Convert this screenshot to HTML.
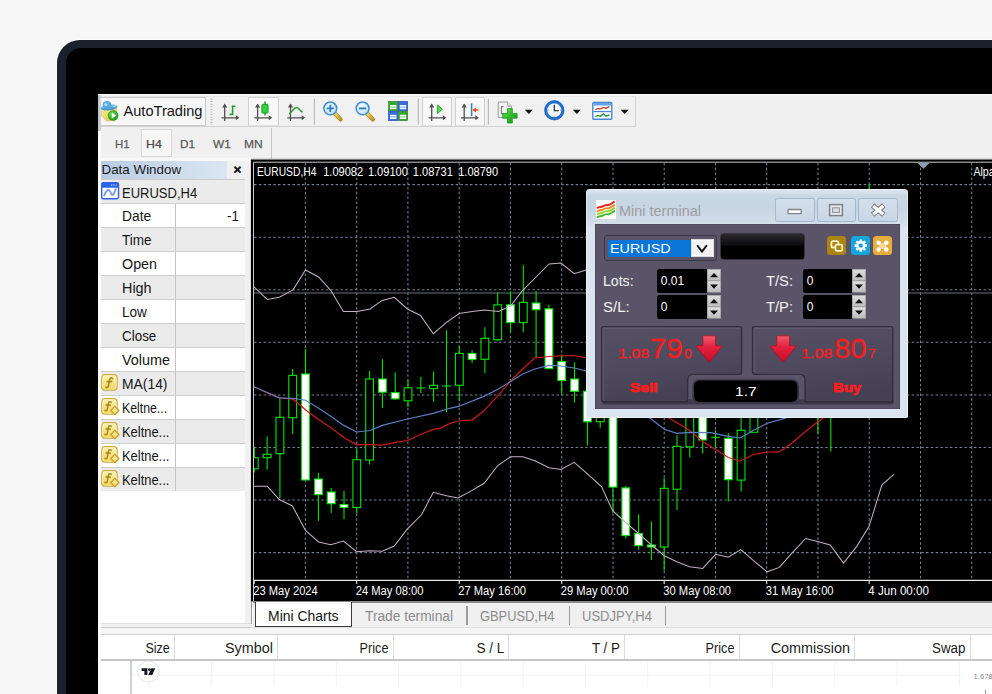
<!DOCTYPE html>
<html lang="en"><head><meta charset="utf-8"><title>Mini terminal</title>
<style>
*{box-sizing:border-box;margin:0;padding:0}
html,body{width:992px;height:694px;overflow:hidden;background:#f7f7f7}
body{position:relative;font-family:"Liberation Sans",sans-serif;color:#111}
.abs{position:absolute}
#frame{left:56.7px;top:39.9px;width:1000px;height:700px;background:#1a202c;border-radius:23px 0 0 0;box-shadow:0 0 0 0.7px #fdfdfd}
#bezel{left:65.9px;top:47.8px;width:1000px;height:700px;background:#000;border-radius:15px 0 0 0}
#app{left:98px;top:94px;width:894px;height:600px;background:#f0f0f0;overflow:hidden}
.ct{font-family:"Liberation Sans",sans-serif;font-size:12px;fill:#fff}
.t{white-space:nowrap;line-height:1}
.row{left:101px;width:144px;height:24px;border-bottom:1px solid #cfcfcf}
.row .div{position:absolute;left:74px;top:0;width:1px;height:23px;background:#c4c4c4}
.g{background:#ebebeb}.w{background:#fff}
.sep{width:1px;background:#dcdcdc;top:635px;height:24px}
</style></head>
<body>
<div id="frame" class="abs"></div>
<div id="bezel" class="abs"></div>
<div id="app" class="abs"></div>
<!-- toolbar -->
<div class="abs" style="left:98px;top:94px;width:894px;height:1px;background:#fbfbfb"></div>
<div class="abs" style="left:98px;top:96px;width:538.4px;height:31.2px;border:1px solid #d2d2d2;border-left:none;border-top-color:#e6e6e6;background:#f1f1f1"></div>
<div class="abs" style="left:101px;top:97px;width:105px;height:29px;border:1px solid #c9c9c9;border-left:none;background:#f7f7f7"></div>
<div class="abs" style="left:248px;top:97px;width:30.5px;height:29px;background:#f8f8f8;border:1px solid #d0d0d0;border-bottom-color:#e2e2e2"></div>
<div class="abs" style="left:422px;top:97px;width:30px;height:29px;background:#f8f8f8;border:1px solid #d0d0d0;border-bottom-color:#e2e2e2"></div>
<div class="abs" style="left:455px;top:97px;width:30px;height:29px;background:#f8f8f8;border:1px solid #d0d0d0;border-bottom-color:#e2e2e2"></div>
<svg class="abs" style="left:0;top:0" width="992" height="160" viewBox="0 0 992 160"><defs><linearGradient id="gy" x1="0" y1="0" x2="1" y2="1"><stop offset="0" stop-color="#fff3a0"/><stop offset="1" stop-color="#e2b93a"/></linearGradient><radialGradient id="gg" cx="0.4" cy="0.35" r="0.7"><stop offset="0" stop-color="#6fe05a"/><stop offset="1" stop-color="#0f9a10"/></radialGradient><linearGradient id="gb" x1="0" y1="0" x2="0" y2="1"><stop offset="0" stop-color="#7cc4ee"/><stop offset="1" stop-color="#3a8fd0"/></linearGradient><linearGradient id="gold" x1="0" y1="0" x2="1" y2="0"><stop offset="0" stop-color="#f3dc78"/><stop offset="1" stop-color="#c89a20"/></linearGradient><radialGradient id="lens" cx="0.4" cy="0.35" r="0.8"><stop offset="0" stop-color="#f4fbff"/><stop offset="1" stop-color="#b5d8f3"/></radialGradient><linearGradient id="gplus" x1="0" y1="0" x2="1" y2="1"><stop offset="0" stop-color="#5be04a"/><stop offset="1" stop-color="#0a9a12"/></linearGradient><radialGradient id="clk" cx="0.5" cy="0.4" r="0.6"><stop offset="0" stop-color="#fff"/><stop offset="1" stop-color="#dfe9f5"/></radialGradient><linearGradient id="spg" x1="0" y1="0" x2="0" y2="1"><stop offset="0" stop-color="#dedede"/><stop offset="1" stop-color="#bdbdbd"/></linearGradient><linearGradient id="fgrad" x1="0" y1="0" x2="0" y2="1"><stop offset="0" stop-color="#fdf4b8"/><stop offset="1" stop-color="#f0d558"/></linearGradient></defs><path d="M100.8 108.6L100.9 114.8L106.4 121L111 120.6L117 114.4L116.6 107.6Z" fill="url(#gy)" stroke="#d2ab3c" stroke-width="0.5"/><ellipse cx="109.1" cy="107.4" rx="8.5" ry="2.9" fill="url(#gb)" transform="rotate(-7 109.1 107.4)"/><ellipse cx="107" cy="104.6" rx="4.3" ry="3.5" fill="#58abe2"/><ellipse cx="105.8" cy="104.4" rx="1.8" ry="1.5" fill="#a8dbf8"/><ellipse cx="114.6" cy="106" rx="1.6" ry="0.9" fill="#a8dbf8" transform="rotate(-20 114.6 106)"/><circle cx="113.1" cy="115.6" r="5" fill="url(#gg)" stroke="#168a18" stroke-width="0.5"/><path d="M111.8 112.6L116.2 115.5L111.8 118.4Z" fill="#fff"/><path d="M211.5 98.5V125" stroke="#b4b4b4" stroke-width="2" stroke-dasharray="1 1.6"/><path d="M224.7 104.8V121 M221.5 117.8H237.7" stroke="#505050" stroke-width="1.3" fill="none"/><path d="M222.1 107.4L224.7 103.6L227.29999999999998 107.4Z M235.89999999999998 115.3L239.29999999999998 117.8L235.89999999999998 120.3Z" fill="#505050"/><path d="M232.6 105.5V115.2 M232.6 106.2H235.4 M229.6 114.4H232.6" stroke="#1ea02a" stroke-width="1.6" fill="none"/><path d="M257.6 104.8V121 M254.40000000000003 117.8H270.6" stroke="#505050" stroke-width="1.3" fill="none"/><path d="M255.00000000000003 107.4L257.6 103.6L260.20000000000005 107.4Z M268.8 115.3L272.20000000000005 117.8L268.8 120.3Z" fill="#505050"/><path d="M265 101.5V115.6" stroke="#1aa326" stroke-width="1.5"/><rect x="261.9" y="104.3" width="6.2" height="8.8" rx="0.8" fill="#2fd23c" stroke="#159a22" stroke-width="0.9"/><path d="M290.5 104.8V121 M287.3 117.8H303.5" stroke="#505050" stroke-width="1.3" fill="none"/><path d="M287.9 107.4L290.5 103.6L293.1 107.4Z M301.7 115.3L305.1 117.8L301.7 120.3Z" fill="#505050"/><path d="M289 114C292 112 294 107.4 296.6 107.6C299 107.8 300 111 302.6 112.2" stroke="#2a9a36" stroke-width="1.5" fill="none"/><path d="M314.4 98.5V124.5 M418.3 98.5V124.5 M488.4 98.5V124.5" stroke="#b9b9b9" stroke-width="1.2"/><path d="M334.5 113L340.5 119.4" stroke="#a8841c" stroke-width="4.2" stroke-linecap="round"/><path d="M334.7 113L340.3 119" stroke="url(#gold)" stroke-width="2.8" stroke-linecap="round"/><circle cx="330.3" cy="108.4" r="6.4" fill="url(#lens)" stroke="#3f8fd2" stroke-width="1.5"/><path d="M326.7 108.4H333.90000000000003 M330.3 104.8V112" stroke="#2f7fbe" stroke-width="1.9"/><path d="M366.8 113L372.8 119.4" stroke="#a8841c" stroke-width="4.2" stroke-linecap="round"/><path d="M367.0 113L372.6 119" stroke="url(#gold)" stroke-width="2.8" stroke-linecap="round"/><circle cx="362.6" cy="108.4" r="6.4" fill="url(#lens)" stroke="#3f8fd2" stroke-width="1.5"/><path d="M359.0 108.4H366.20000000000005" stroke="#2f7fbe" stroke-width="1.9"/><rect x="388.5" y="101.4" width="9.4" height="9.4" fill="#3aa52e" stroke="#1f7d1c" stroke-width="0.6"/><rect x="390.0" y="105.0" width="6.4" height="4.2" fill="#f4f8ff"/><path d="M390.0 107.10000000000001H396.4" stroke="#3aa52e" stroke-width="0.8" opacity="0.7"/><rect x="398.3" y="101.4" width="9.4" height="9.4" fill="#3a6fe0" stroke="#1c46b8" stroke-width="0.6"/><rect x="399.8" y="105.0" width="6.4" height="4.2" fill="#f4f8ff"/><path d="M399.8 107.10000000000001H406.2" stroke="#3a6fe0" stroke-width="0.8" opacity="0.7"/><rect x="388.5" y="111.2" width="9.4" height="9.4" fill="#3a6fe0" stroke="#1c46b8" stroke-width="0.6"/><rect x="390.0" y="114.8" width="6.4" height="4.2" fill="#f4f8ff"/><path d="M390.0 116.9H396.4" stroke="#3a6fe0" stroke-width="0.8" opacity="0.7"/><rect x="398.3" y="111.2" width="9.4" height="9.4" fill="#3aa52e" stroke="#1f7d1c" stroke-width="0.6"/><rect x="399.8" y="114.8" width="6.4" height="4.2" fill="#f4f8ff"/><path d="M399.8 116.9H406.2" stroke="#3aa52e" stroke-width="0.8" opacity="0.7"/><path d="M431.7 104.8V121 M428.5 117.8H444.7" stroke="#505050" stroke-width="1.3" fill="none"/><path d="M429.09999999999997 107.4L431.7 103.6L434.3 107.4Z M442.9 115.3L446.3 117.8L442.9 120.3Z" fill="#505050"/><path d="M437.4 104.9V113.6L442.4 109.3Z" fill="#5fd85a" stroke="#1f9a2a" stroke-width="0.9"/><path d="M464.2 104.8V121 M461.0 117.8H477.2" stroke="#505050" stroke-width="1.3" fill="none"/><path d="M461.59999999999997 107.4L464.2 103.6L466.8 107.4Z M475.4 115.3L478.8 117.8L475.4 120.3Z" fill="#505050"/><path d="M471.6 103.4V116.2" stroke="#2f7fc4" stroke-width="1.5"/><path d="M473 110H478.6" stroke="#e0521a" stroke-width="1.4"/><path d="M472.6 110L476.2 107.2V112.8Z" fill="#e0521a"/><path d="M498.2 102H507.4L511.6 106.2V117.6H498.2Z" fill="#f4f4f4" stroke="#9a9a9a" stroke-width="1"/><path d="M507.4 102V106.2H511.6" fill="#dcdcdc" stroke="#9a9a9a" stroke-width="0.8"/><path d="M503.6 106.6H501.4V113.6H503.6" stroke="#7a7a6a" stroke-width="1.1" fill="none"/><path d="M507.5 108.6H512.3V113.4H517.1V118.2H512.3V123H507.5V118.2H502.7V113.4H507.5Z" fill="url(#gplus)" stroke="#0e8a14" stroke-width="0.7"/><path d="M524.8 109.8H532.8L528.8 114Z" fill="#111"/><circle cx="554.3" cy="110.3" r="8.4" fill="url(#clk)" stroke="#1d6fd6" stroke-width="2.7"/><circle cx="554.3" cy="110.3" r="9.7" fill="none" stroke="#1554a8" stroke-width="0.7"/><path d="M554.3 105V110.6H558.6" stroke="#333" stroke-width="1.3" fill="none"/><path d="M554.3 103.4V104.4 M554.3 116.2V117.2 M547.4 110.3H548.4 M560.2 110.3H561.2" stroke="#7a8aa0" stroke-width="0.9"/><path d="M572.8 109.8H580.8L576.8 114Z" fill="#111"/><rect x="592.8" y="102.4" width="19" height="16.8" rx="1" fill="#fff" stroke="#4a86d6" stroke-width="1.4"/><rect x="593.4" y="103" width="17.8" height="2.6" fill="#6aa2e8"/><path d="M593.4 111.6H611.2" stroke="#4a86d6" stroke-width="1.2"/><path d="M595.4 109.6L598 108.4L600 109L603 107.4L606 108.2L609.4 106.6" stroke="#b8472a" stroke-width="1.4" fill="none"/><path d="M595.4 116.6L598 115.4L600.4 116.4L603.4 113.8L606 116.2L609.4 115" stroke="#2a9a3a" stroke-width="1.4" fill="none"/><path d="M620.7 109.8H628.7L624.7 114Z" fill="#111"/></svg>
<div class="abs t" style="left:123.5px;top:103.5px;font-size:14.6px;color:#151515">AutoTrading</div>
<div class="abs" style="left:97.7px;top:94.5px;width:3.3px;height:36.5px;background:linear-gradient(90deg,#bcbfc6,#d0d3d9)"></div>
<div class="abs" style="left:97.7px;top:131px;width:3.3px;height:563px;background:#fcfcfc"></div>
<!-- timeframe bar -->
<div class="abs" style="left:141px;top:129px;width:31px;height:28px;border:1px solid #d6d6d6;background:#f7f7f7"></div>
<div class="abs t" style="left:114.90px;top:139.45px;font-size:11.4px;transform:scaleX(1.0019);transform-origin:left center;color:#5a5a5a;-webkit-text-stroke:0.25px #5a5a5a;">H1</div>
<div class="abs t" style="left:146.30px;top:139.45px;font-size:11.4px;transform:scaleX(1.0842);transform-origin:left center;color:#4a4a4a;-webkit-text-stroke:0.25px #4a4a4a;">H4</div>
<div class="abs t" style="left:180.30px;top:139.45px;font-size:11.4px;transform:scaleX(1.0362);transform-origin:left center;color:#5a5a5a;-webkit-text-stroke:0.25px #5a5a5a;">D1</div>
<div class="abs t" style="left:212.90px;top:139.45px;font-size:11.4px;transform:scaleX(1.0409);transform-origin:left center;color:#5a5a5a;-webkit-text-stroke:0.25px #5a5a5a;">W1</div>
<div class="abs t" style="left:243.80px;top:139.45px;font-size:11.4px;transform:scaleX(1.0548);transform-origin:left center;color:#5a5a5a;-webkit-text-stroke:0.25px #5a5a5a;">MN</div>
<div class="abs" style="left:271.3px;top:128px;width:1.2px;height:30.5px;background:#c6c6c6"></div>
<!-- data window -->
<div class="abs" style="left:101px;top:158.4px;width:149px;height:2.8px;background:#f9f9f9"></div>
<div class="abs" style="left:101px;top:161px;width:126px;height:18px;background:linear-gradient(90deg,#b8cce4,#dbe6f1)"></div>
<div class="abs t" style="left:101.5px;top:162.5px;font-size:13.4px;color:#1a1a1a">Data Window</div>
<div class="abs t" style="left:233.5px;top:163.2px;font-size:13.5px;font-weight:bold;color:#111;-webkit-text-stroke:0.5px #111">×</div>
<div class="abs" style="left:101px;top:179.2px;width:144px;height:24.8px;background:#ebebeb;border-bottom:1px solid #cfcfcf;border-top:1.2px solid #cdcdcd"></div>
<svg class="abs" style="left:101px;top:182.4px;" width="19" height="18" viewBox="0 0 19 18"><rect x="0.7" y="0.7" width="16.8" height="16" rx="1.6" fill="#fff" stroke="#2a63ea" stroke-width="1.4"/><rect x="0.7" y="0.7" width="16.8" height="5.1" rx="1.2" fill="#2a63ea"/><rect x="10" y="2.4" width="1.3" height="1.3" fill="#b9c9f7"/><rect x="12.4" y="2.4" width="1.3" height="1.3" fill="#b9c9f7"/><rect x="14.8" y="2.4" width="1.3" height="1.3" fill="#e88"/><path d="M3.2 13.4C5 9.6 6.4 6.8 8.2 8.4C10 10 10.6 14.6 12.4 12.4C13.6 10.8 14 8.4 14.8 7" stroke="#7d9bea" stroke-width="1.9" fill="none" stroke-linecap="round"/></svg>
<div class="abs t" style="left:121.80px;top:185.75px;font-size:14px;transform:scaleX(0.9295);transform-origin:left center;color:#161616;">EURUSD,H4</div>
<div class="abs row w" style="top:203.5px"><span class="div"></span></div>
<div class="abs t" style="left:121.60px;top:210.22px;font-size:13.8px;transform:scaleX(1.0017);transform-origin:left center;color:#161616;">Date</div>
<div class="abs t" style="left:226.80px;top:210.22px;font-size:13.8px;transform:scaleX(0.9617);transform-origin:left center;color:#161616;">-1</div>
<div class="abs row g" style="top:227.5px"><span class="div"></span></div>
<div class="abs t" style="left:121.60px;top:234.22px;font-size:13.8px;transform:scaleX(0.9816);transform-origin:left center;color:#161616;">Time</div>
<div class="abs row w" style="top:251.5px"><span class="div"></span></div>
<div class="abs t" style="left:121.60px;top:258.22px;font-size:13.8px;transform:scaleX(1.0368);transform-origin:left center;color:#161616;">Open</div>
<div class="abs row g" style="top:275.5px"><span class="div"></span></div>
<div class="abs t" style="left:121.60px;top:282.22px;font-size:13.8px;transform:scaleX(1.0429);transform-origin:left center;color:#161616;">High</div>
<div class="abs row w" style="top:299.5px"><span class="div"></span></div>
<div class="abs t" style="left:121.60px;top:306.22px;font-size:13.8px;transform:scaleX(0.9836);transform-origin:left center;color:#161616;">Low</div>
<div class="abs row g" style="top:323.5px"><span class="div"></span></div>
<div class="abs t" style="left:121.60px;top:330.22px;font-size:13.8px;transform:scaleX(0.9722);transform-origin:left center;color:#161616;">Close</div>
<div class="abs row w" style="top:347.5px"><span class="div"></span></div>
<div class="abs t" style="left:121.60px;top:354.22px;font-size:13.8px;transform:scaleX(1.0450);transform-origin:left center;color:#161616;">Volume</div>
<div class="abs row g" style="top:371.5px"><svg class="abs" style="left:0.3px;top:2.6px;overflow:visible" width="20" height="19" viewBox="0 0 20 19"><rect x="0.7" y="0.7" width="15.4" height="15.4" rx="3" fill="url(#fgrad)" stroke="#cfaa34" stroke-width="1.2"/><rect x="1.7" y="1.7" width="13.4" height="13.4" rx="2.2" fill="none" stroke="#fffbe0" stroke-width="0.7" opacity="0.8"/><path d="M11.6 4.6C10.2 3.4 8.9 4 8.6 5.8L7.4 12C7.1 13.6 6 14 4.9 13.1 M6.2 7.7H10.6" fill="none" stroke="#a98a20" stroke-width="1.7" stroke-linecap="round"/></svg><span class="div"></span></div>
<div class="abs t" style="left:121.60px;top:378.22px;font-size:13.8px;transform:scaleX(1.0057);transform-origin:left center;color:#161616;">MA(14)</div>
<div class="abs row w" style="top:395.5px"><svg class="abs" style="left:0.3px;top:2.6px;overflow:visible" width="20" height="19" viewBox="0 0 20 19"><rect x="0.7" y="0.7" width="15.4" height="15.4" rx="3" fill="url(#fgrad)" stroke="#cfaa34" stroke-width="1.2"/><rect x="1.7" y="1.7" width="13.4" height="13.4" rx="2.2" fill="none" stroke="#fffbe0" stroke-width="0.7" opacity="0.8"/><path d="M10.2 4.2C8.9 3.2 7.7 3.8 7.4 5.4L6.3 11.2C6 12.7 5 13.1 4 12.3 M5.2 7.1H9.2" fill="none" stroke="#a98a20" stroke-width="1.6" stroke-linecap="round"/><path d="M13.9 8.4L18 12.5L13.9 16.6L9.8 12.5Z" fill="#f8e47c" stroke="#c49c24" stroke-width="1.1"/></svg><span class="div"></span></div>
<div class="abs t" style="left:121.60px;top:402.22px;font-size:13.8px;transform:scaleX(0.8908);transform-origin:left center;color:#161616;">Keltne...</div>
<div class="abs row g" style="top:419.5px"><svg class="abs" style="left:0.3px;top:2.6px;overflow:visible" width="20" height="19" viewBox="0 0 20 19"><rect x="0.7" y="0.7" width="15.4" height="15.4" rx="3" fill="url(#fgrad)" stroke="#cfaa34" stroke-width="1.2"/><rect x="1.7" y="1.7" width="13.4" height="13.4" rx="2.2" fill="none" stroke="#fffbe0" stroke-width="0.7" opacity="0.8"/><path d="M10.2 4.2C8.9 3.2 7.7 3.8 7.4 5.4L6.3 11.2C6 12.7 5 13.1 4 12.3 M5.2 7.1H9.2" fill="none" stroke="#a98a20" stroke-width="1.6" stroke-linecap="round"/><path d="M13.9 8.4L18 12.5L13.9 16.6L9.8 12.5Z" fill="#f8e47c" stroke="#c49c24" stroke-width="1.1"/></svg><span class="div"></span></div>
<div class="abs t" style="left:121.60px;top:426.22px;font-size:13.8px;transform:scaleX(0.9362);transform-origin:left center;color:#161616;">Keltne...</div>
<div class="abs row w" style="top:443.5px"><svg class="abs" style="left:0.3px;top:2.6px;overflow:visible" width="20" height="19" viewBox="0 0 20 19"><rect x="0.7" y="0.7" width="15.4" height="15.4" rx="3" fill="url(#fgrad)" stroke="#cfaa34" stroke-width="1.2"/><rect x="1.7" y="1.7" width="13.4" height="13.4" rx="2.2" fill="none" stroke="#fffbe0" stroke-width="0.7" opacity="0.8"/><path d="M10.2 4.2C8.9 3.2 7.7 3.8 7.4 5.4L6.3 11.2C6 12.7 5 13.1 4 12.3 M5.2 7.1H9.2" fill="none" stroke="#a98a20" stroke-width="1.6" stroke-linecap="round"/><path d="M13.9 8.4L18 12.5L13.9 16.6L9.8 12.5Z" fill="#f8e47c" stroke="#c49c24" stroke-width="1.1"/></svg><span class="div"></span></div>
<div class="abs t" style="left:121.60px;top:450.22px;font-size:13.8px;transform:scaleX(0.9362);transform-origin:left center;color:#161616;">Keltne...</div>
<div class="abs row g" style="top:467.5px"><svg class="abs" style="left:0.3px;top:2.6px;overflow:visible" width="20" height="19" viewBox="0 0 20 19"><rect x="0.7" y="0.7" width="15.4" height="15.4" rx="3" fill="url(#fgrad)" stroke="#cfaa34" stroke-width="1.2"/><rect x="1.7" y="1.7" width="13.4" height="13.4" rx="2.2" fill="none" stroke="#fffbe0" stroke-width="0.7" opacity="0.8"/><path d="M10.2 4.2C8.9 3.2 7.7 3.8 7.4 5.4L6.3 11.2C6 12.7 5 13.1 4 12.3 M5.2 7.1H9.2" fill="none" stroke="#a98a20" stroke-width="1.6" stroke-linecap="round"/><path d="M13.9 8.4L18 12.5L13.9 16.6L9.8 12.5Z" fill="#f8e47c" stroke="#c49c24" stroke-width="1.1"/></svg><span class="div"></span></div>
<div class="abs t" style="left:121.60px;top:474.22px;font-size:13.8px;transform:scaleX(0.9362);transform-origin:left center;color:#161616;">Keltne...</div>
<div class="abs" style="left:101px;top:491px;width:144px;height:132px;background:#fff"></div>
<div class="abs" style="left:245px;top:180px;width:6px;height:443px;background:#f0f0f0"></div>
<div class="abs" style="left:101px;top:622.6px;width:150px;height:0.9px;background:#e2e2e2"></div>
<svg class="chart" width="992" height="694" viewBox="0 0 992 694" style="position:absolute;left:0;top:0">
<defs><clipPath id="cc"><rect x="254" y="163" width="738" height="418"/></clipPath></defs>
<rect x="250.9" y="159.5" width="742" height="442" fill="#000"/>
<rect x="251" y="158.8" width="741" height="1.1" fill="#777"/>
<path d="M253.5 601 V162.2 H992" fill="none" stroke="#c8c8c8" stroke-width="1"/>
<path d="M305.4 163V580 M356.7 163V580 M407.9 163V580 M459.2 163V580 M510.4 163V580 M561.7 163V580 M613.0 163V580 M664.2 163V580 M715.5 163V580 M766.7 163V580 M818.0 163V580 M869.2 163V580 M920.5 163V580 M971.7 163V580 M254 184.6H992 M254 237.2H992 M254 289.7H992 M254 342.3H992 M254 394.9H992 M254 447.5H992 M254 500.0H992 M254 552.6H992" stroke="#708091" stroke-width="1.05" stroke-dasharray="2.5 2.3" fill="none"/>
<path d="M254 293H992" stroke="#67737f" stroke-width="1.1"/>
<g clip-path="url(#cc)">
<path d="M254.3 447.6V472.4" stroke="#00e400" stroke-width="1.1"/>
<rect x="250.4" y="457.7" width="7.8" height="11.1" fill="#000" stroke="#00e400" stroke-width="1.1"/>
<path d="M267.1 436.5V469.8" stroke="#00e400" stroke-width="1.1"/>
<rect x="263.2" y="454.3" width="7.8" height="3.4" fill="#000" stroke="#00e400" stroke-width="1.1"/>
<path d="M279.9 398.2V498.0" stroke="#00e400" stroke-width="1.1"/>
<rect x="276.0" y="417.3" width="7.8" height="36.4" fill="#000" stroke="#00e400" stroke-width="1.1"/>
<path d="M292.7 369.0V434.0" stroke="#00e400" stroke-width="1.1"/>
<rect x="288.8" y="375.4" width="7.8" height="42.3" fill="#000" stroke="#00e400" stroke-width="1.1"/>
<path d="M305.5 348.8V480.0" stroke="#00e400" stroke-width="1.1"/>
<rect x="301.6" y="374.0" width="7.8" height="106.0" fill="#fff" stroke="#00e400" stroke-width="1.1"/>
<path d="M318.4 472.8V520.9" stroke="#00e400" stroke-width="1.1"/>
<rect x="314.5" y="479.0" width="7.8" height="15.6" fill="#fff" stroke="#00e400" stroke-width="1.1"/>
<path d="M331.2 488.0V513.0" stroke="#00e400" stroke-width="1.1"/>
<rect x="327.3" y="492.0" width="7.8" height="11.7" fill="#fff" stroke="#00e400" stroke-width="1.1"/>
<path d="M344.0 491.0V519.0" stroke="#00e400" stroke-width="1.1"/>
<rect x="340.1" y="504.5" width="7.8" height="3.0" fill="#fff" stroke="#00e400" stroke-width="1.1"/>
<path d="M356.8 448.6V513.4" stroke="#00e400" stroke-width="1.1"/>
<rect x="352.9" y="459.7" width="7.8" height="47.8" fill="#000" stroke="#00e400" stroke-width="1.1"/>
<path d="M369.6 371.0V464.4" stroke="#00e400" stroke-width="1.1"/>
<rect x="365.7" y="379.0" width="7.8" height="81.0" fill="#000" stroke="#00e400" stroke-width="1.1"/>
<path d="M382.4 359.0V408.0" stroke="#00e400" stroke-width="1.1"/>
<rect x="378.5" y="379.0" width="7.8" height="13.2" fill="#fff" stroke="#00e400" stroke-width="1.1"/>
<path d="M395.2 372.4V400.0" stroke="#00e400" stroke-width="1.1"/>
<rect x="391.3" y="392.6" width="7.8" height="6.2" fill="#fff" stroke="#00e400" stroke-width="1.1"/>
<path d="M408.0 380.0V407.0" stroke="#00e400" stroke-width="1.1"/>
<rect x="404.1" y="387.8" width="7.8" height="13.0" fill="#000" stroke="#00e400" stroke-width="1.1"/>
<path d="M420.8 377.0V393.0" stroke="#00e400" stroke-width="1.1"/>
<path d="M416.5 388.0H425.1" stroke="#00e400" stroke-width="1.1"/>
<path d="M433.6 371.6V401.8" stroke="#00e400" stroke-width="1.1"/>
<rect x="429.7" y="385.3" width="7.8" height="3.3" fill="#000" stroke="#00e400" stroke-width="1.1"/>
<path d="M446.5 330.2V412.3" stroke="#00e400" stroke-width="1.1"/>
<path d="M442.2 386.0H450.8" stroke="#00e400" stroke-width="1.1"/>
<path d="M459.3 345.8V401.0" stroke="#00e400" stroke-width="1.1"/>
<rect x="455.4" y="353.4" width="7.8" height="31.9" fill="#000" stroke="#00e400" stroke-width="1.1"/>
<path d="M472.1 350.2V363.0" stroke="#00e400" stroke-width="1.1"/>
<rect x="468.2" y="353.4" width="7.8" height="6.1" fill="#fff" stroke="#00e400" stroke-width="1.1"/>
<path d="M484.9 327.2V373.0" stroke="#00e400" stroke-width="1.1"/>
<rect x="481.0" y="338.3" width="7.8" height="21.0" fill="#000" stroke="#00e400" stroke-width="1.1"/>
<path d="M497.7 292.3V341.3" stroke="#00e400" stroke-width="1.1"/>
<rect x="493.8" y="304.8" width="7.8" height="34.9" fill="#000" stroke="#00e400" stroke-width="1.1"/>
<path d="M510.5 291.3V332.3" stroke="#00e400" stroke-width="1.1"/>
<rect x="506.6" y="304.8" width="7.8" height="17.8" fill="#fff" stroke="#00e400" stroke-width="1.1"/>
<path d="M523.3 265.0V332.3" stroke="#00e400" stroke-width="1.1"/>
<rect x="519.4" y="302.4" width="7.8" height="20.2" fill="#000" stroke="#00e400" stroke-width="1.1"/>
<path d="M536.1 291.3V356.9" stroke="#00e400" stroke-width="1.1"/>
<rect x="532.2" y="303.0" width="7.8" height="6.8" fill="#fff" stroke="#00e400" stroke-width="1.1"/>
<path d="M548.9 304.8V368.6" stroke="#00e400" stroke-width="1.1"/>
<rect x="545.0" y="308.8" width="7.8" height="59.8" fill="#fff" stroke="#00e400" stroke-width="1.1"/>
<path d="M561.7 354.5V393.7" stroke="#00e400" stroke-width="1.1"/>
<rect x="557.8" y="361.5" width="7.8" height="19.0" fill="#fff" stroke="#00e400" stroke-width="1.1"/>
<path d="M574.5 362.5V402.6" stroke="#00e400" stroke-width="1.1"/>
<rect x="570.6" y="379.0" width="7.8" height="12.3" fill="#fff" stroke="#00e400" stroke-width="1.1"/>
<path d="M587.4 385.0V445.6" stroke="#00e400" stroke-width="1.1"/>
<rect x="583.5" y="391.2" width="7.8" height="30.6" fill="#fff" stroke="#00e400" stroke-width="1.1"/>
<path d="M600.2 380.0V427.8" stroke="#00e400" stroke-width="1.1"/>
<rect x="596.3" y="390.0" width="7.8" height="31.8" fill="#000" stroke="#00e400" stroke-width="1.1"/>
<path d="M613.0 400.0V512.7" stroke="#00e400" stroke-width="1.1"/>
<rect x="609.1" y="405.0" width="7.8" height="82.1" fill="#fff" stroke="#00e400" stroke-width="1.1"/>
<path d="M625.8 485.8V538.6" stroke="#00e400" stroke-width="1.1"/>
<rect x="621.9" y="487.9" width="7.8" height="47.7" fill="#fff" stroke="#00e400" stroke-width="1.1"/>
<path d="M638.6 514.3V549.6" stroke="#00e400" stroke-width="1.1"/>
<rect x="634.7" y="533.5" width="7.8" height="12.1" fill="#fff" stroke="#00e400" stroke-width="1.1"/>
<path d="M651.4 521.4V560.0" stroke="#00e400" stroke-width="1.1"/>
<rect x="647.5" y="545.0" width="7.8" height="2.0" fill="#fff" stroke="#00e400" stroke-width="1.1"/>
<path d="M664.2 477.7V570.8" stroke="#00e400" stroke-width="1.1"/>
<rect x="660.3" y="488.3" width="7.8" height="58.7" fill="#000" stroke="#00e400" stroke-width="1.1"/>
<path d="M677.0 435.3V510.0" stroke="#00e400" stroke-width="1.1"/>
<rect x="673.1" y="446.4" width="7.8" height="42.9" fill="#000" stroke="#00e400" stroke-width="1.1"/>
<path d="M689.8 400.0V457.5" stroke="#00e400" stroke-width="1.1"/>
<rect x="685.9" y="405.0" width="7.8" height="41.8" fill="#000" stroke="#00e400" stroke-width="1.1"/>
<path d="M702.7 400.0V453.5" stroke="#00e400" stroke-width="1.1"/>
<rect x="698.8" y="405.0" width="7.8" height="35.0" fill="#fff" stroke="#00e400" stroke-width="1.1"/>
<path d="M715.5 430.3V447.4" stroke="#00e400" stroke-width="1.1"/>
<path d="M711.2 437.3H719.8" stroke="#00e400" stroke-width="1.1"/>
<path d="M728.3 433.3V501.5" stroke="#00e400" stroke-width="1.1"/>
<rect x="724.4" y="438.3" width="7.8" height="41.4" fill="#fff" stroke="#00e400" stroke-width="1.1"/>
<path d="M741.1 400.0V491.4" stroke="#00e400" stroke-width="1.1"/>
<rect x="737.2" y="430.3" width="7.8" height="49.8" fill="#000" stroke="#00e400" stroke-width="1.1"/>
<path d="M753.9 400.0V432.3" stroke="#00e400" stroke-width="1.1"/>
<rect x="750.0" y="405.0" width="7.8" height="27.3" fill="#000" stroke="#00e400" stroke-width="1.1"/>
<path d="M817.9 400.0V433.7" stroke="#00e400" stroke-width="1.1"/>
<path d="M830.8 400.0V451.5" stroke="#00e400" stroke-width="1.1"/>
<path d="M869.2 184.3V200.0" stroke="#00e400" stroke-width="1.1"/>
<polyline points="254.0,286.8 267.2,299.4 279.3,297.3 293.0,289.9 305.5,270.0 318.6,277.0 330.7,290.3 343.4,311.5 357.0,311.5 370.0,309.0 382.2,300.4 394.3,297.3 407.4,309.0 420.5,315.5 433.3,333.7 446.5,322.4 459.2,313.5 472.3,311.5 484.4,310.0 498.5,311.5 510.6,306.0 522.7,290.3 536.0,277.0 549.0,264.0 561.0,263.0 574.2,273.7 586.3,270.0 600.0,268.0" fill="none" stroke="#c3aec4" stroke-width="1.05"/>
<polyline points="254.0,486.2 267.2,486.2 279.3,499.5 292.4,506.0 305.5,530.5 318.6,542.0 330.7,544.7 343.4,541.0 356.6,551.7 370.0,550.7 382.2,551.3 394.3,546.1 407.4,528.9 421.5,514.8 433.3,492.3 446.5,495.7 458.2,498.0 471.7,490.6 484.4,483.0 497.5,465.8 510.6,456.7 522.7,456.7 534.9,460.7 549.0,467.8 561.0,469.4 574.2,462.3 586.3,472.8 601.5,486.5 612.6,510.7 625.7,522.5 639.8,534.6 651.5,545.0 664.3,555.7 676.8,561.7 689.5,566.8 702.7,568.4 715.6,554.3 728.3,557.3 740.8,549.6 753.5,560.7 767.2,571.8 779.3,567.4 791.5,553.7 805.6,538.5 817.6,541.6 830.3,545.0 843.5,563.1 856.6,546.6 869.1,526.4 881.8,485.0 893.9,474.3" fill="none" stroke="#c3aec4" stroke-width="1.05"/>
<polyline points="254.0,386.7 270.2,394.1 279.3,397.8 293.0,399.2 308.5,412.3 318.6,419.4 330.7,427.4 343.8,437.5 356.6,444.6 370.0,444.6 382.2,445.2 394.3,442.6 407.4,440.5 420.5,434.5 433.3,429.4 440.0,428.4 449.8,423.4 458.2,421.0 472.3,419.8 483.4,411.3 498.5,395.1 510.6,381.0 522.7,369.0 534.9,357.9 549.0,356.5 561.0,355.9 574.2,355.5 586.3,357.9 600.0,362.0 640.0,400.0 669.4,418.2 689.5,430.3 702.7,441.4 715.6,449.4 728.3,457.5 740.0,461.2 753.5,454.5 767.2,452.0 779.3,451.9 791.5,443.4 805.6,431.3 822.7,418.2 835.0,408.0" fill="none" stroke="#d01818" stroke-width="1.2"/>
<polyline points="254.0,386.7 279.3,397.8 295.4,398.6 305.5,400.2 318.6,408.3 330.7,416.3 343.8,425.4 356.6,432.0 370.0,430.5 382.2,425.4 407.4,419.0 433.3,413.3 449.8,408.3 459.2,406.2 484.4,396.1 498.5,389.0 510.6,381.5 522.7,374.0 534.9,369.0 549.0,365.3 561.0,366.0 574.2,368.0 586.3,371.0 600.0,378.0 625.0,400.0 650.2,418.2 664.3,429.3 676.8,433.3 689.5,432.3 710.7,432.7 728.3,436.3 740.0,438.0 753.5,430.3 767.2,423.2 785.4,418.2 800.0,412.0" fill="none" stroke="#5b7fc4" stroke-width="1.2"/>
</g>
<path d="M254 580.4H992" stroke="#e8e8e8" stroke-width="1.2"/>
<path d="M254.2 580V584 M356.7 580V584 M459.2 580V584 M561.7 580V584 M664.2 580V584 M766.7 580V584 M869.2 580V584" stroke="#e8e8e8" stroke-width="1.1"/>
<text x="253.2" y="595" class="ct" textLength="64.6" lengthAdjust="spacingAndGlyphs">23 May 2024</text>
<text x="355.7" y="595" class="ct" textLength="67.8" lengthAdjust="spacingAndGlyphs">24 May 08:00</text>
<text x="458.2" y="595" class="ct" textLength="67.8" lengthAdjust="spacingAndGlyphs">27 May 16:00</text>
<text x="560.8" y="595" class="ct" textLength="67.8" lengthAdjust="spacingAndGlyphs">29 May 00:00</text>
<text x="663.3" y="595" class="ct" textLength="67.8" lengthAdjust="spacingAndGlyphs">30 May 08:00</text>
<text x="765.8" y="595" class="ct" textLength="67.8" lengthAdjust="spacingAndGlyphs">31 May 16:00</text>
<text x="868.3" y="595" class="ct" textLength="60.6" lengthAdjust="spacingAndGlyphs">4 Jun 00:00</text>
<text x="257" y="175.6" class="ct" textLength="59.4" lengthAdjust="spacingAndGlyphs">EURUSD,H4</text>
<text x="323.2" y="175.6" class="ct" textLength="40" lengthAdjust="spacingAndGlyphs">1.09082</text>
<text x="367.9" y="175.6" class="ct" textLength="40" lengthAdjust="spacingAndGlyphs">1.09100</text>
<text x="412.8" y="175.6" class="ct" textLength="40" lengthAdjust="spacingAndGlyphs">1.08731</text>
<text x="458.2" y="175.6" class="ct" textLength="40" lengthAdjust="spacingAndGlyphs">1.08790</text>
<text x="973.4" y="176.2" class="ct" textLength="27.2" lengthAdjust="spacingAndGlyphs">Alpari</text>
<path d="M917.3 162.7H929.7L923.5 168.8Z" fill="#8e9db3"/>
</svg>
<!-- tabs -->
<div class="abs" style="left:251px;top:601px;width:741px;height:1.5px;background:#8a8a8a"></div>
<div class="abs" style="left:251px;top:602px;width:2px;height:22px;background:#fff;border-left:1px solid #9a9a9a"></div>
<div class="abs" style="left:254.6px;top:601.5px;width:97px;height:25.5px;background:#fff;border:1.5px solid #3c3c3c;border-top:none"></div>
<div class="abs t" style="left:267.60px;top:609.52px;font-size:13.8px;transform:scaleX(1.0117);transform-origin:left center;color:#151515;">Mini Charts</div>
<div class="abs t" style="left:364.60px;top:609.52px;font-size:13.8px;transform:scaleX(0.9949);transform-origin:left center;color:#8c8c8c;">Trade terminal</div>
<div class="abs t" style="left:480.40px;top:609.52px;font-size:13.8px;transform:scaleX(0.9329);transform-origin:left center;color:#8c8c8c;">GBPUSD,H4</div>
<div class="abs t" style="left:581.80px;top:609.52px;font-size:13.8px;transform:scaleX(0.9441);transform-origin:left center;color:#8c8c8c;">USDJPY,H4</div>
<div class="abs" style="left:466.4px;top:606px;width:1.2px;height:19px;background:#9c9c9c"></div>
<div class="abs" style="left:569.2px;top:606px;width:1.2px;height:19px;background:#9c9c9c"></div>
<div class="abs" style="left:665.2px;top:606px;width:1.2px;height:19px;background:#9c9c9c"></div>
<!-- terminal table -->
<div class="abs" style="left:101px;top:627px;width:150px;height:1.2px;background:#cbcbcb"></div>
<div class="abs" style="left:251px;top:627px;width:741px;height:1.2px;background:#dfdfdf"></div>
<div class="abs" style="left:101px;top:628.2px;width:891px;height:5.4px;background:#f5f5f5"></div>
<div class="abs" style="left:101px;top:633.5px;width:891px;height:27px;background:#fff;border-top:1.5px solid #cfcfcf;border-bottom:2px solid #c6c6c6"></div>
<div class="abs" style="left:101px;top:661px;width:891px;height:33px;background:#fff"></div>
<div class="abs t" style="right:822.20px;top:641.72px;font-size:13.8px;transform:scaleX(0.9089);transform-origin:right center;color:#1c1c1c;">Size</div>
<div class="abs sep" style="left:173.7px"></div>
<div class="abs t" style="right:718.90px;top:641.72px;font-size:13.8px;transform:scaleX(1.0431);transform-origin:right center;color:#1c1c1c;">Symbol</div>
<div class="abs sep" style="left:277.0px"></div>
<div class="abs t" style="right:603.10px;top:641.72px;font-size:13.8px;transform:scaleX(0.9192);transform-origin:right center;color:#1c1c1c;">Price</div>
<div class="abs sep" style="left:392.8px"></div>
<div class="abs t" style="right:488.10px;top:641.72px;font-size:13.8px;transform:scaleX(0.9866);transform-origin:right center;color:#1c1c1c;">S / L</div>
<div class="abs sep" style="left:507.8px"></div>
<div class="abs t" style="right:372.20px;top:641.72px;font-size:13.8px;transform:scaleX(0.9693);transform-origin:right center;color:#1c1c1c;">T / P</div>
<div class="abs sep" style="left:623.7px"></div>
<div class="abs t" style="right:257.20px;top:641.72px;font-size:13.8px;transform:scaleX(0.9192);transform-origin:right center;color:#1c1c1c;">Price</div>
<div class="abs sep" style="left:738.7px"></div>
<div class="abs t" style="right:141.90px;top:641.72px;font-size:13.8px;transform:scaleX(1.0433);transform-origin:right center;color:#1c1c1c;">Commission</div>
<div class="abs sep" style="left:854.0px"></div>
<div class="abs t" style="right:26.40px;top:641.72px;font-size:13.8px;transform:scaleX(0.9704);transform-origin:right center;color:#1c1c1c;">Swap</div>
<div class="abs sep" style="left:969.5px"></div>
<!-- bottom chart widget -->
<div class="abs" style="left:130.3px;top:661px;width:1.7px;height:33px;background:#ccd0d7"></div>
<svg class="abs" style="left:0;top:0" width="992" height="694" viewBox="0 0 992 694"><path d="M149.4 661V687 M211.7 661V687 M274.0 661V687 M336.29999999999995 661V687 M398.6 661V687 M460.9 661V687 M523.1999999999999 661V687 M585.5 661V687 M647.8 661V687 M710.0999999999999 661V687 M772.4 661V687 M834.6999999999999 661V687 M896.9999999999999 661V687 M959.3 661V687 M132 675.2H965" stroke="#f1f3f9" stroke-width="1" fill="none"/><circle cx="148.3" cy="671.6" r="10.5" fill="#fff" stroke="#e3e6ee" stroke-width="1"/><path d="M141.6 668.2H147.4V675H144.4V671H141.6Z M151.2 668.2H155.2L152.3 675H148.3Z" fill="#16181f"/><circle cx="149.3" cy="669.6" r="1.4" fill="#16181f"/></svg>
<div class="abs t" style="left:973.60px;top:672.57px;font-size:7.6px;color:#8a8a8f;">1.6785</div>
<div class="abs" style="left:985px;top:690px;width:1px;height:4px;background:#999"></div>
<!-- mini terminal -->
<div class="abs" style="left:586.3px;top:189px;width:321.7px;height:228.5px;border-radius:4px 4px 2px 2px;background:linear-gradient(#dfe8f1 0,#c9d6e4 3%,#c8d5e3 9%,#d1dce9 14%,#d9e4ef 17%,#dae5f0);box-shadow:inset 0 0 0 1px rgba(255,255,255,.45)"></div>
<div class="abs" style="left:594.5px;top:224px;width:305.5px;height:185px;background:#5a5468;box-shadow:inset 0 0 0 0.6px #47425a"></div>
<svg class="abs" style="left:596px;top:200px;" width="20" height="19" viewBox="0 0 20 19"><rect x="0" y="0" width="20" height="19" fill="#fdfdfd"/><path d="M1 8.4C3 6 4.6 7.6 6.6 6.4S10 4.6 12 5S15.6 3.6 18.6 1.4" stroke="#e0261a" stroke-width="2" fill="none"/><path d="M1 11.6C3 9.4 4.6 10.8 6.6 9.6S10 7.8 12 8.2S15.6 6.8 18.8 4.6" stroke="#f08a1a" stroke-width="1.9" fill="none"/><path d="M1 14.6C3 12.4 4.6 13.8 6.6 12.6S10 10.8 12 11.2S15.6 9.8 18.8 7.6" stroke="#9ad02a" stroke-width="1.9" fill="none"/><path d="M1 17.6C3 15.4 4.6 16.8 6.6 15.6S10 13.8 12 14.2S15.6 12.8 18.8 10.6" stroke="#3db82a" stroke-width="1.9" fill="none"/></svg>
<div class="abs t" style="left:619.00px;top:204.10px;font-size:14.3px;transform:scaleX(1.0117);transform-origin:left center;color:#9d9ea1;">Mini terminal</div>
<div class="abs" style="left:775.3px;top:198px;width:39.40000000000009px;height:23.5px;border-radius:2.5px;border:1px solid #a8b8cc;background:linear-gradient(#d3deeb,#cad7e6)"></div>
<div class="abs" style="left:816.6px;top:198px;width:39.89999999999998px;height:23.5px;border-radius:2.5px;border:1px solid #a8b8cc;background:linear-gradient(#d3deeb,#cad7e6)"></div>
<div class="abs" style="left:858px;top:198px;width:40px;height:23.5px;border-radius:2.5px;border:1px solid #a8b8cc;background:linear-gradient(#d3deeb,#cad7e6)"></div>
<svg class="abs" style="left:775px;top:198px;" width="124" height="24" viewBox="0 0 124 24"><rect x="13" y="11.5" width="13.2" height="4.2" rx="0.8" fill="#fff" stroke="#7f8288" stroke-width="1.3"/><rect x="54.6" y="6.6" width="12.8" height="11" fill="#e4e9ef" stroke="#7f8288" stroke-width="1.5"/><rect x="57.6" y="9.8" width="6.8" height="4.6" fill="#d3dde9" stroke="#8d9096" stroke-width="1"/><path d="M97.6 7.4L108.8 16.8 M108.8 7.4L97.6 16.8" stroke="#7b7f87" stroke-width="5.4" stroke-linecap="butt"/><path d="M98.2 7.9L108.2 16.3 M108.2 7.9L98.2 16.3" stroke="#fff" stroke-width="3.2" stroke-linecap="butt"/></svg>
<div class="abs" style="left:603.8px;top:235.2px;width:113px;height:26px;border-radius:3px;border:1.6px solid #3c3747;background:#5a5468"></div>
<div class="abs" style="left:608.3px;top:239.8px;width:82.4px;height:17px;background:#0a76d8"></div>
<div class="abs t" style="left:609.60px;top:242.17px;font-size:13.5px;transform:scaleX(1.0630);transform-origin:left center;color:#fff;">EURUSD</div>
<div class="abs" style="left:690.7px;top:239.3px;width:23px;height:17.4px;background:#f3f3f3;border:1px solid #d9d9d9;box-shadow:inset 0 0 0 0.6px #fff"></div>
<svg class="abs" style="left:694px;top:242px;" width="16" height="13" viewBox="0 0 16 13"><path d="M3.2 3.2L8 9.6L12.8 3.2" stroke="#111" stroke-width="1.9" fill="none"/></svg>
<div class="abs" style="left:720.4px;top:233.2px;width:84.2px;height:26.4px;border-radius:3.5px;background:linear-gradient(#2a2a2e,#0c0c0e 45%,#000 50%,#000);border:1px solid #37333f"></div>
<div class="abs" style="left:827px;top:236px;width:19.2px;height:19.2px;border-radius:3.5px;background:#ab8416"></div>
<div class="abs" style="left:851px;top:236px;width:19.2px;height:19.2px;border-radius:3.5px;background:#18a4dc"></div>
<div class="abs" style="left:872.7px;top:236px;width:19.2px;height:19.2px;border-radius:3.5px;background:#e6ae3c"></div>
<svg class="abs" style="left:827px;top:236px;" width="20" height="20" viewBox="0 0 20 20"><rect x="4.4" y="5.2" width="7" height="6.3" rx="1.6" fill="none" stroke="#fff4cc" stroke-width="1.8"/><rect x="8.4" y="8.6" width="6.8" height="6.2" rx="1.6" fill="#ab8416" stroke="#fff4cc" stroke-width="1.8"/></svg>
<svg class="abs" style="left:851px;top:236px;" width="20" height="20" viewBox="0 0 20 20"><rect x="8.5" y="3.4" width="2.6" height="12.4" rx="0.5" fill="#fff" transform="rotate(0 9.8 9.6)"/><rect x="8.5" y="3.4" width="2.6" height="12.4" rx="0.5" fill="#fff" transform="rotate(45 9.8 9.6)"/><rect x="8.5" y="3.4" width="2.6" height="12.4" rx="0.5" fill="#fff" transform="rotate(90 9.8 9.6)"/><rect x="8.5" y="3.4" width="2.6" height="12.4" rx="0.5" fill="#fff" transform="rotate(135 9.8 9.6)"/><circle cx="9.8" cy="9.6" r="4.5" fill="#fff"/><circle cx="9.8" cy="9.6" r="2.2" fill="#18a4dc"/></svg>
<svg class="abs" style="left:872.7px;top:236px;" width="20" height="20" viewBox="0 0 20 20"><rect x="6" y="7" width="7" height="6" fill="#f3d59a"/><circle cx="5.6" cy="6.7" r="2.25" fill="#fffdf6"/><circle cx="13.3" cy="6.7" r="2.25" fill="#fffdf6"/><circle cx="5.6" cy="13.4" r="2.25" fill="#fffdf6"/><circle cx="13.3" cy="13.4" r="2.25" fill="#fffdf6"/></svg>
<div class="abs t" style="left:602.80px;top:274.30px;font-size:14.3px;transform:scaleX(0.9870);transform-origin:left center;color:#f2f2f2;">Lots:</div>
<div class="abs t" style="left:602.80px;top:300.00px;font-size:14.3px;transform:scaleX(1.0457);transform-origin:left center;color:#f2f2f2;">S/L:</div>
<div class="abs t" style="left:766.40px;top:274.30px;font-size:14.3px;transform:scaleX(1.0298);transform-origin:left center;color:#f2f2f2;">T/S:</div>
<div class="abs t" style="left:766.40px;top:300.00px;font-size:14.3px;transform:scaleX(1.0298);transform-origin:left center;color:#f2f2f2;">T/P:</div>
<div class="abs" style="left:657px;top:269px;width:52px;height:23.5px;background:#000;border-radius:2.5px 0 0 2.5px"></div>
<div class="abs t" style="left:660.80px;top:275.24px;font-size:12px;color:#fff;">0.01</div>
<svg class="abs" style="left:707px;top:269px;" width="14" height="23.5" viewBox="0 0 14 23.5"><rect x="0" y="0" width="14" height="23.5" fill="#5a5468"/><rect x="0.3" y="0.3" width="13.4" height="11.25" fill="url(#spg)" stroke="#a6a6a6" stroke-width="0.6"/><rect x="0.3" y="11.95" width="13.4" height="11.25" fill="url(#spg)" stroke="#a6a6a6" stroke-width="0.6"/><path d="M3.0 8.15H11.0L7.0 3.95Z M3.0 15.55H11.0L7.0 19.75Z" fill="#0c0c0c"/></svg>
<div class="abs" style="left:657px;top:295px;width:52px;height:23.5px;background:#000;border-radius:2.5px 0 0 2.5px"></div>
<div class="abs t" style="left:660.80px;top:301.24px;font-size:12px;color:#fff;">0</div>
<svg class="abs" style="left:707px;top:295px;" width="14" height="23.5" viewBox="0 0 14 23.5"><rect x="0" y="0" width="14" height="23.5" fill="#5a5468"/><rect x="0.3" y="0.3" width="13.4" height="11.25" fill="url(#spg)" stroke="#a6a6a6" stroke-width="0.6"/><rect x="0.3" y="11.95" width="13.4" height="11.25" fill="url(#spg)" stroke="#a6a6a6" stroke-width="0.6"/><path d="M3.0 8.15H11.0L7.0 3.95Z M3.0 15.55H11.0L7.0 19.75Z" fill="#0c0c0c"/></svg>
<div class="abs" style="left:803px;top:269px;width:51px;height:23.5px;background:#000;border-radius:2.5px 0 0 2.5px"></div>
<div class="abs t" style="left:806.80px;top:275.24px;font-size:12px;color:#fff;">0</div>
<svg class="abs" style="left:852px;top:269px;" width="14" height="23.5" viewBox="0 0 14 23.5"><rect x="0" y="0" width="14" height="23.5" fill="#5a5468"/><rect x="0.3" y="0.3" width="13.4" height="11.25" fill="url(#spg)" stroke="#a6a6a6" stroke-width="0.6"/><rect x="0.3" y="11.95" width="13.4" height="11.25" fill="url(#spg)" stroke="#a6a6a6" stroke-width="0.6"/><path d="M3.0 8.15H11.0L7.0 3.95Z M3.0 15.55H11.0L7.0 19.75Z" fill="#0c0c0c"/></svg>
<div class="abs" style="left:803px;top:295px;width:51px;height:23.5px;background:#000;border-radius:2.5px 0 0 2.5px"></div>
<div class="abs t" style="left:806.80px;top:301.24px;font-size:12px;color:#fff;">0</div>
<svg class="abs" style="left:852px;top:295px;" width="14" height="23.5" viewBox="0 0 14 23.5"><rect x="0" y="0" width="14" height="23.5" fill="#5a5468"/><rect x="0.3" y="0.3" width="13.4" height="11.25" fill="url(#spg)" stroke="#a6a6a6" stroke-width="0.6"/><rect x="0.3" y="11.95" width="13.4" height="11.25" fill="url(#spg)" stroke="#a6a6a6" stroke-width="0.6"/><path d="M3.0 8.15H11.0L7.0 3.95Z M3.0 15.55H11.0L7.0 19.75Z" fill="#0c0c0c"/></svg>
<svg class="abs" style="left:594.5px;top:321px;" width="306" height="88" viewBox="0 0 306 88"><defs><linearGradient id="bg1" x1="0" y1="0" x2="0.3" y2="1"><stop offset="0" stop-color="#565064"/><stop offset="0.6" stop-color="#4f495d"/><stop offset="1" stop-color="#454053"/></linearGradient><linearGradient id="tray" x1="0" y1="0" x2="0" y2="1"><stop offset="0" stop-color="#4c475a"/><stop offset="1" stop-color="#3c3848"/></linearGradient></defs><path d="M7 78.4H299V80.6Q299 83.4 296 83.4H10Q7 83.4 7 80.6Z" fill="#3e394a"/><path d="M8 5.6H145Q146.6 5.6 146.6 7.2V51Q146.6 53.4 144.2 53.4H98.4Q92.6 53.4 92.6 59.2V78.4Q92.6 80.8 90.2 80.8H9Q6.6 80.8 6.6 78.4V7Q6.6 5.6 8 5.6Z" fill="url(#bg1)" stroke="#332e3e" stroke-width="1.4"/><path d="M8.1 79V7.2H145" fill="none" stroke="#69637a" stroke-width="0.9" opacity="0.8"/><path d="M159 5.6H296.4Q297.8 5.6 297.8 7V78.4Q297.8 80.8 295.4 80.8H212.4Q210 80.8 210 78.4V59.2Q210 53.4 204.2 53.4H160Q157.6 53.4 157.6 51V7Q157.6 5.6 159 5.6Z" fill="url(#bg1)" stroke="#332e3e" stroke-width="1.4"/><path d="M159.1 51V7.2H296" fill="none" stroke="#69637a" stroke-width="0.9" opacity="0.8"/><rect x="97.4" y="58.2" width="106.6" height="24" rx="6.5" fill="#3a3546"/><rect x="99" y="59.6" width="103.4" height="21.4" rx="5.6" fill="#000"/></svg>
<div class="abs t" style="left:617.60px;top:347.66px;font-size:12.8px;transform:scaleX(1.2524);transform-origin:left center;color:#ff1c1c;-webkit-text-stroke:0.3px #ff1c1c;">1.08</div>
<div class="abs t" style="left:650.20px;top:335.54px;font-size:27px;transform:scaleX(1.0855);transform-origin:left center;color:#ff1c1c;-webkit-text-stroke:0.3px #ff1c1c;">79</div>
<div class="abs t" style="left:684.00px;top:347.73px;font-size:12.6px;color:#ff1c1c;transform:scaleX(1.08);transform-origin:left;-webkit-text-stroke:0.3px #ff1c1c;">0</div>
<svg class="abs" style="left:695.8px;top:335.2px;" width="27" height="28" viewBox="0 0 27 28"><defs><linearGradient id="ra695" x1="0" y1="0" x2="0" y2="1"><stop offset="0" stop-color="#ef5a6c"/><stop offset="0.45" stop-color="#e21f3c"/><stop offset="1" stop-color="#c40e2a"/></linearGradient></defs><path d="M7.4 0.8H19L19.6 1.4V10.8H25.2Q26.2 11 25.6 12L14 26.6Q13.2 27.4 12.4 26.6L0.8 12Q0.2 11 1.2 10.8H6.8V1.4Z" fill="url(#ra695)" stroke="#b20e26" stroke-width="0.8"/></svg>
<svg class="abs" style="left:769.8px;top:335.2px;" width="27" height="28" viewBox="0 0 27 28"><defs><linearGradient id="ra769" x1="0" y1="0" x2="0" y2="1"><stop offset="0" stop-color="#ef5a6c"/><stop offset="0.45" stop-color="#e21f3c"/><stop offset="1" stop-color="#c40e2a"/></linearGradient></defs><path d="M7.4 0.8H19L19.6 1.4V10.8H25.2Q26.2 11 25.6 12L14 26.6Q13.2 27.4 12.4 26.6L0.8 12Q0.2 11 1.2 10.8H6.8V1.4Z" fill="url(#ra769)" stroke="#b20e26" stroke-width="0.8"/></svg>
<div class="abs t" style="left:801.40px;top:347.66px;font-size:12.8px;transform:scaleX(1.2684);transform-origin:left center;color:#ff1c1c;-webkit-text-stroke:0.3px #ff1c1c;">1.08</div>
<div class="abs t" style="left:834.40px;top:335.54px;font-size:27px;transform:scaleX(1.0855);transform-origin:left center;color:#ff1c1c;-webkit-text-stroke:0.3px #ff1c1c;">80</div>
<div class="abs t" style="left:867.60px;top:347.73px;font-size:12.6px;color:#ff1c1c;transform:scaleX(1.08);transform-origin:left;-webkit-text-stroke:0.3px #ff1c1c;">7</div>
<div class="abs t" style="left:630.40px;top:382.43px;font-size:12.6px;transform:scaleX(1.2314);transform-origin:left center;font-weight:bold;color:#ff1c1c;-webkit-text-stroke:0.7px #ff1c1c;">Sell</div>
<div class="abs t" style="left:833.00px;top:382.43px;font-size:12.6px;transform:scaleX(1.1763);transform-origin:left center;font-weight:bold;color:#ff1c1c;-webkit-text-stroke:0.7px #ff1c1c;">Buy</div>
<div class="abs t" style="left:735.00px;top:385.90px;font-size:12.4px;transform:scaleX(1.2531);transform-origin:left center;color:#fff;">1.7</div>
</body></html>
